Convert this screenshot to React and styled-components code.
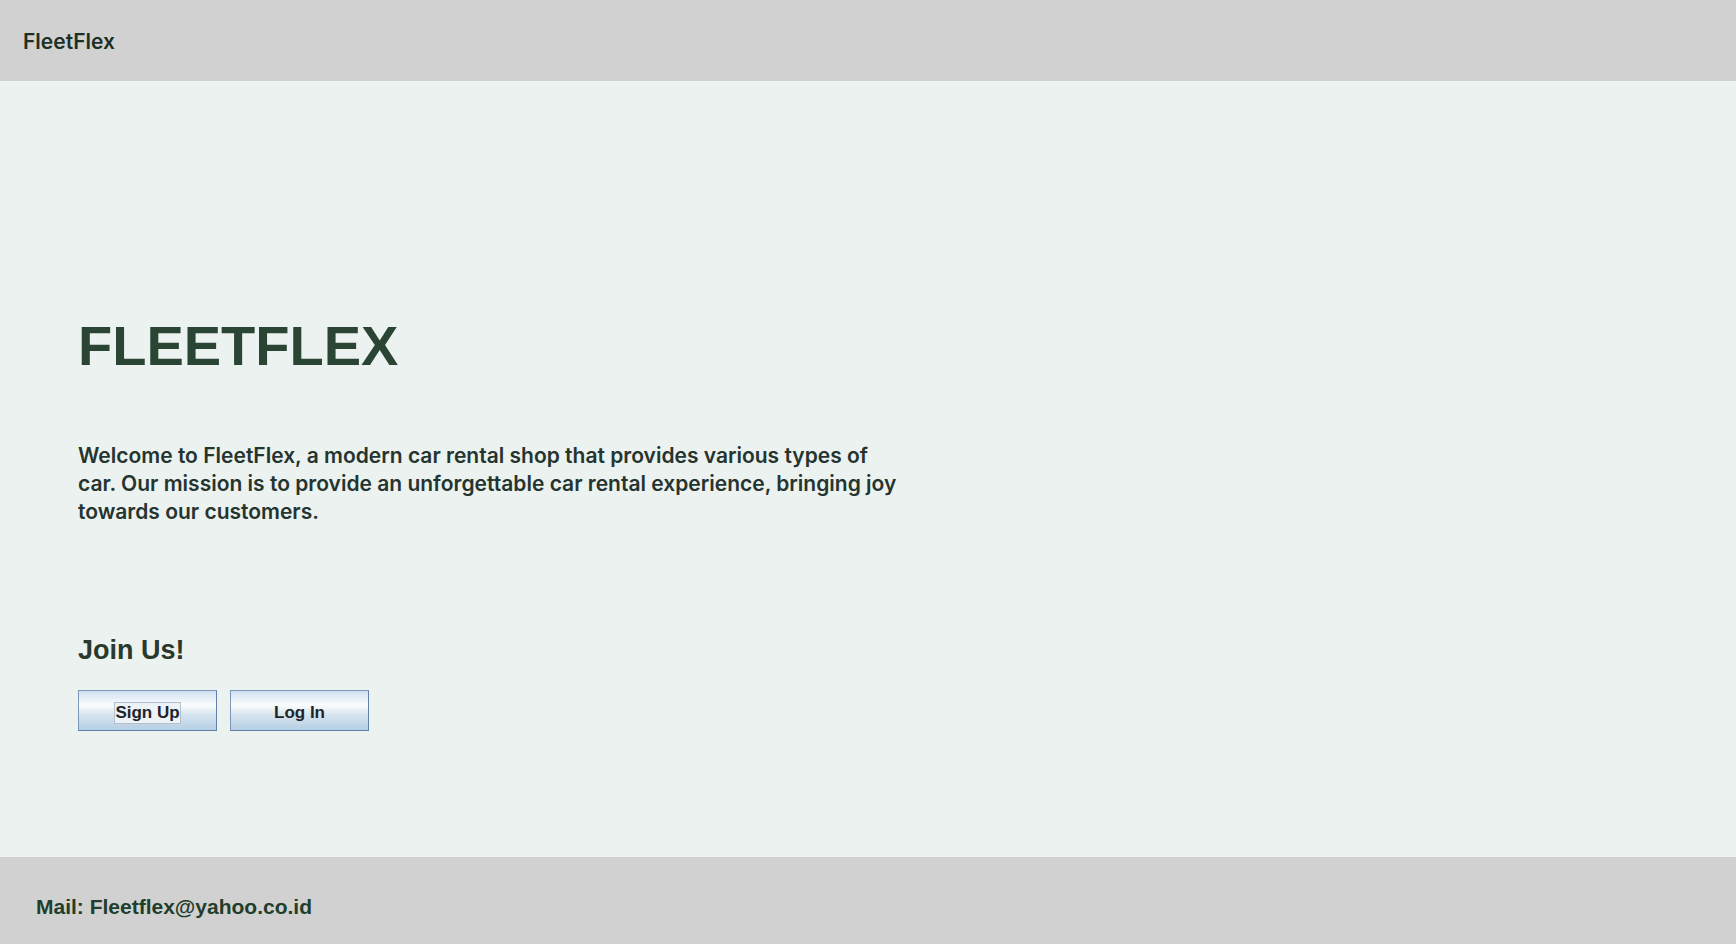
import React from "react";
import styled, { createGlobalStyle } from "styled-components";

const GlobalStyle = createGlobalStyle`
  *, *::before, *::after { box-sizing: border-box; }
  body {
    margin: 0;
    background: #ebf2f0;
    color: #26342f;
    font-family: "Liberation Sans", Arial, sans-serif;
  }
`;

const Page = styled.div`
  min-height: 100vh;
  display: flex;
  flex-direction: column;
`;

const Header = styled.header`
  display: flex;
  align-items: center;
  padding: 30px 23px 27px;
  background: #d2d1d1;
`;

const Brand = styled.span`
  font-family: Inter, sans-serif;
  font-size: 21px;
  line-height: 24px;
  font-weight: 600;
  color: #1d3025;
`;

const Main = styled.main`
  flex: 1;
  display: flex;
  flex-direction: column;
  justify-content: flex-end;
  align-items: flex-start;
  padding: 80px 78px 126px;
`;

const Title = styled.h1`
  margin: 0;
  font-size: 56px;
  line-height: 64px;
  font-weight: 700;
  color: #2b4535;
`;

const Intro = styled.p`
  margin: 64px 0 108px;
  font-family: Inter, sans-serif;
  font-size: 21px;
  line-height: 28px;
  font-weight: 600;
`;

const SubTitle = styled.h2`
  margin: 0 0 24px;
  font-size: 27px;
  line-height: 32px;
  font-weight: 700;
  color: #2a392b;
`;

const Actions = styled.div`
  display: flex;
  gap: 13px;
`;

const Button = styled.button`
  width: 139px;
  height: 41px;
  padding: 4px 0 0;
  border: 1px solid #7c98b8;
  border-right-color: #5f80a8;
  border-bottom-color: #5f80a8;
  border-radius: 0;
  background: linear-gradient(#cfdff0, #fafcfd 34%, #f3f7fa 42%, #d5e3ef 62%, #b5cfe2);
  font-family: "Liberation Sans", Arial, sans-serif;
  font-size: 17px;
  line-height: 20px;
  font-weight: 700;
  color: #20242a;
  cursor: pointer;
`;

const FocusMark = styled.span`
  display: inline-block;
  border: 1px solid #b4c1cc;
  background: #edf2f6;
`;

const Footer = styled.footer`
  padding: 38px 36px 25px;
  background: #d2d1d1;
  font-size: 21px;
  line-height: 24px;
  font-weight: 700;
  color: #1f3e2c;
`;

export default function App() {
  return (
    <Page>
      <GlobalStyle />
      <Header>
        <Brand>FleetFlex</Brand>
      </Header>
      <Main>
        <Title>FLEETFLEX</Title>
        <Intro>
          Welcome to FleetFlex, a modern car rental shop that provides various types of
          <br />
          car. Our mission is to provide an unforgettable car rental experience, bringing joy
          <br />
          towards our customers.
        </Intro>
        <SubTitle>Join Us!</SubTitle>
        <Actions>
          <Button type="button">
            <FocusMark>Sign Up</FocusMark>
          </Button>
          <Button type="button">Log In</Button>
        </Actions>
      </Main>
      <Footer>Mail: Fleetflex@yahoo.co.id</Footer>
    </Page>
  );
}
